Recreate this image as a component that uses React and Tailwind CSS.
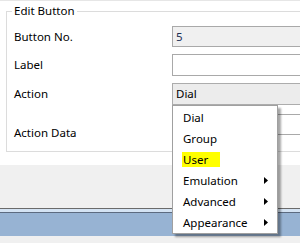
import React from 'react';

const font = { fontFamily: '"Noto Sans", "Open Sans", sans-serif' };

const Arrow = () => (
  <svg width="4" height="7" viewBox="0 0 4 7" className="block">
    <path d="M0 0 L4 3.5 L0 7 Z" fill="#000" />
  </svg>
);

const MenuItem = ({ children, sub }) => (
  <div className="flex h-[21px] items-center justify-between pl-[10px] pr-[9px]">
    <span>{children}</span>
    {sub && <Arrow />}
  </div>
);

const Row = ({ label, className, children }) => (
  <div className={`flex items-center ${className}`}>
    <div className="w-[165px] pl-[7px]">{label}</div>
    {children}
  </div>
);

export default function App() {
  return (
    <div className="relative h-[243px] w-[300px] overflow-hidden bg-[#f0f0f0] text-[11.5px] text-black" style={font}>
      {/* main white panel */}
      <div className="h-[165px] border-t border-[#e6e6e6] bg-white pt-[3px]">
        <fieldset className="ml-[6px] mr-[-10px] h-[148px] border border-[#dcdcdc]">
          <legend className="ml-[5px] px-[2px] leading-[14px]">Edit Button</legend>
          <Row label="Button No." className="mt-[8px]">
            <div className="flex h-[21px] flex-1 items-center border border-[#a9a9a9] bg-[#f0f0f0] pl-[3px] text-[#1c2f55]">5</div>
          </Row>
          <Row label="Label" className="mt-[7px]">
            <div className="h-[22px] flex-1 border border-[#a9a9a9] bg-white" />
          </Row>
          <Row label="Action" className="mt-[7px]">
            <div className="flex h-[22px] flex-1 items-center border border-[#acacac] bg-[#ececec] pl-[3px]">Dial</div>
          </Row>
          <div className="mt-[9px] flex">
            <div className="w-[165px] pl-[7px] pt-[10px]">Action Data</div>
            <div className="h-[21px] flex-1 border border-[#a9a9a9] bg-white" />
          </div>
        </fieldset>
      </div>

      {/* status / task strip */}
      <div className="mt-[43px] h-[1px] bg-[#6b6b6b]" />
      <div className="h-[3px] bg-[#d4e3f3]" />
      <div className="h-[1px] bg-[#5c6b80]" />
      <div className="h-[23px] bg-[#97b3d3]" />

      {/* dropdown menu */}
      <div className="absolute left-[172px] top-[105px] w-[106px] border border-[#a0a0a0] bg-white pt-[1px] shadow-[3px_3px_2px_rgba(0,0,0,0.35)]">
        <MenuItem>Dial</MenuItem>
        <MenuItem>Group</MenuItem>
        <div className="flex h-[21px] items-center pl-[9px]">
          <span className="inline-flex h-[15px] w-[38px] items-center bg-[#ffff00] pl-[1px]">User</span>
        </div>
        <MenuItem sub>Emulation</MenuItem>
        <MenuItem sub>Advanced</MenuItem>
        <MenuItem sub>Appearance</MenuItem>
      </div>
    </div>
  );
}
